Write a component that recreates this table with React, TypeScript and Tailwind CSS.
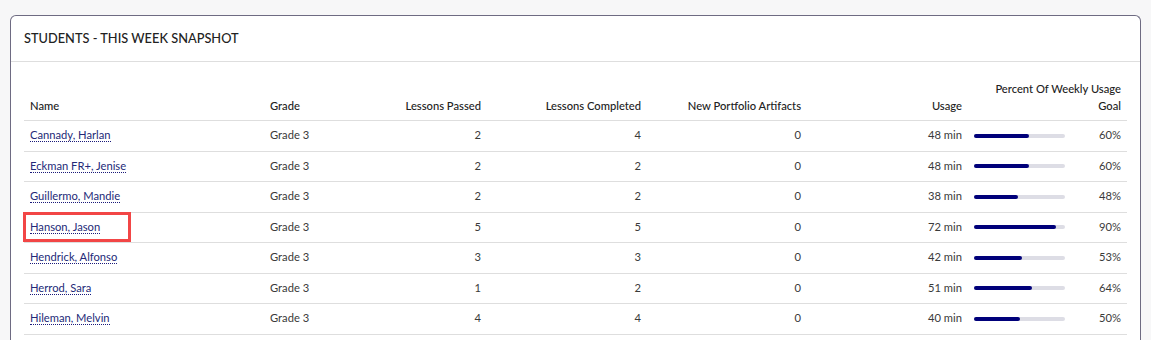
import React from 'react';

type Student = {
  name: string;
  grade: string;
  passed: number;
  completed: number;
  artifacts: number;
  usage: number;
  pct: number;
  highlight?: boolean;
};

const students: Student[] = [
  { name: 'Cannady, Harlan', grade: 'Grade 3', passed: 2, completed: 4, artifacts: 0, usage: 48, pct: 60 },
  { name: 'Eckman FR+, Jenise', grade: 'Grade 3', passed: 2, completed: 2, artifacts: 0, usage: 48, pct: 60 },
  { name: 'Guillermo, Mandie', grade: 'Grade 3', passed: 2, completed: 2, artifacts: 0, usage: 38, pct: 48 },
  { name: 'Hanson, Jason', grade: 'Grade 3', passed: 5, completed: 5, artifacts: 0, usage: 72, pct: 90, highlight: true },
  { name: 'Hendrick, Alfonso', grade: 'Grade 3', passed: 3, completed: 3, artifacts: 0, usage: 42, pct: 53 },
  { name: 'Herrod, Sara', grade: 'Grade 3', passed: 1, completed: 2, artifacts: 0, usage: 51, pct: 64 },
  { name: 'Hileman, Melvin', grade: 'Grade 3', passed: 4, completed: 4, artifacts: 0, usage: 40, pct: 50 },
];

const UsageBar = ({ pct }: { pct: number }) => (
  <div className="h-[4px] w-[91px] rounded-full bg-[#dddde5]">
    <div className="h-full rounded-full bg-[#00007a]" style={{ width: `${pct}%` }} />
  </div>
);

export default function App() {
  return (
    <div className="min-h-[340px] bg-[#f7f7f8] px-[10px] pt-[15px] font-['Lato','Liberation_Sans',sans-serif] text-[11.2px] text-[#333]">
      <div className="h-[326px] overflow-hidden rounded-t-[6px] border border-b-0 border-[#6e6b82] bg-white">
        {/* 헤더 */}
        <div className="flex h-[46px] items-center border-b border-[#dedede] px-[13px]">
          <h2 className="text-[12.8px] font-medium text-[#222]">STUDENTS - THIS WEEK SNAPSHOT</h2>
        </div>

        <div className="px-[13px] pt-[18px]">
          <table className="w-full table-fixed border-collapse">
            <colgroup>
              <col className="w-[240px]" />
              <col className="w-[100px]" />
              <col className="w-[123px]" />
              <col className="w-[160px]" />
              <col className="w-[160px]" />
              <col className="w-[161px]" />
              <col className="w-[103px]" />
              <col />
            </colgroup>
            <thead>
              <tr className="border-b border-[#dedede] align-bottom leading-[17px] text-[#222]">
                <th className="px-[6px] pb-[6px] text-left font-medium">Name</th>
                <th className="px-[6px] pb-[6px] text-left font-medium">Grade</th>
                <th className="px-[6px] pb-[6px] text-right font-medium">Lessons Passed</th>
                <th className="px-[6px] pb-[6px] text-right font-medium">Lessons Completed</th>
                <th className="px-[6px] pb-[6px] text-right font-medium">New Portfolio Artifacts</th>
                <th className="px-[6px] pb-[6px] text-right font-medium">Usage</th>
                <th colSpan={2} className="px-[6px] pb-[6px] text-right font-medium">
                  Percent Of Weekly Usage
                  <br />
                  Goal
                </th>
              </tr>
            </thead>
            <tbody className="text-[#3a3a3a]">
              {students.map((s) => (
                <tr key={s.name} className="h-[30.5px] border-b border-[#dedede]">
                  <td className="relative px-[6px]">
                    <a
                      href="#"
                      className="border-b border-dotted border-[#1a1a7a] text-[#232a78] no-underline"
                    >
                      {s.name}
                    </a>
                    {s.highlight && (
                      <span className="pointer-events-none absolute top-[-1px] left-[-1px] h-[30px] w-[108px] border-[3px] border-[#f24646]" />
                    )}
                  </td>
                  <td className="px-[6px]">{s.grade}</td>
                  <td className="px-[6px] text-right">{s.passed}</td>
                  <td className="px-[6px] text-right">{s.completed}</td>
                  <td className="px-[6px] text-right">{s.artifacts}</td>
                  <td className="px-[6px] text-right">{s.usage} min</td>
                  <td className="px-[6px]">
                    <UsageBar pct={s.pct} />
                  </td>
                  <td className="px-[6px] text-right">{s.pct}%</td>
                </tr>
              ))}
            </tbody>
          </table>
        </div>
      </div>
    </div>
  );
}
